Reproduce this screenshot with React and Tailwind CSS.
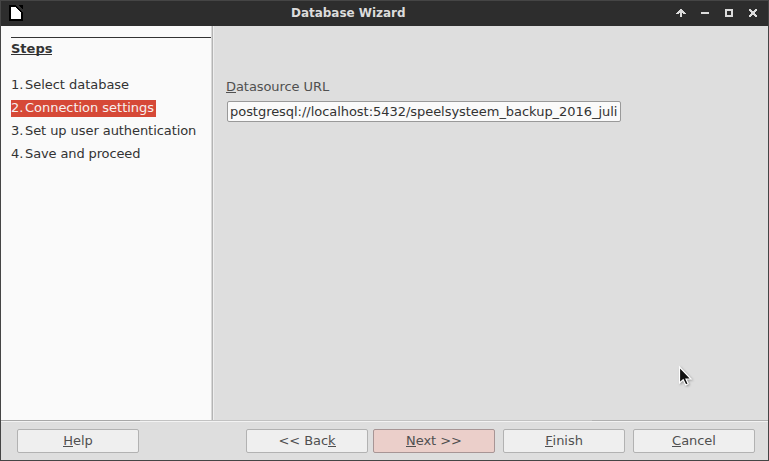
import React from "react";

const steps = ["Select database", "Connection settings", "Set up user authentication", "Save and proceed"];

const stepStyles = [
  "tracking-[-0.03px]",
  "tracking-[-0.03px] bg-[#d64937] text-[#f7f0ef]",
  "tracking-[-0.07px]",
  "tracking-[-0.12px]",
];

function DocumentIcon() {
  return (
    <svg className="ml-2 mt-1 block" width="14" height="16" viewBox="0 0 14 16" shapeRendering="crispEdges">
      <path d="M0 0H14V16H0Z" fill="#000" />
      <path d="M7 0H9L14 5V8L12 6Z" fill="#303030" />
      <path d="M2 2H7V3H8V4H9V5H10V6H11V7H12V14H2Z" fill="#fff" />
    </svg>
  );
}

function WindowControls() {
  return (
    <svg className="block" width="92" height="25" viewBox="676 1 92 25" shapeRendering="crispEdges" fill="#dcdcdc">
      <path d="M680 9h2v1h1v1h1v1h1v1h1v1h-3v-1h-1v4h-2v-4h-1v1h-3v-1h1v-1h1v-1h1v-1h1z" />
      <path d="M701 12h8v2h-8z" />
      <path fillRule="evenodd" d="M725 9h8v8h-8zM727 11v4h4v-4z" />
      <path d="M749 9h2v1h1v1h2v-1h1v-1h2v2h-1v1h-1v2h1v1h1v2h-2v-1h-1v-1h-2v1h-1v1h-2v-2h1v-1h1v-2h-1v-1h-1z" />
    </svg>
  );
}

function WizardButton({ className = "", children }) {
  return (
    <button
      className={
        "flex h-6 w-[122px] shrink-0 justify-center whitespace-pre rounded-[2px] border pt-px text-center leading-[19px] tracking-[-0.04px] text-[#505050] " +
        (className || "border-[#b2b2b2] bg-[#efefef]")
      }
    >
      <span>{children}</span>
    </button>
  );
}

function Mnemonic({ children }) {
  return <span className="inline-block h-[14px] border-b border-[#505050] leading-[16px]">{children}</span>;
}

export default function App() {
  return (
    <div className="flex h-[461px] w-[769px] flex-col overflow-hidden border border-[#454545] bg-[#dedede] font-['DejaVu_Sans',sans-serif] text-[13px] text-[#333]">
      <header className="flex h-[25px] shrink-0 bg-[#2d2d2d]">
        <DocumentIcon />
        <h1 className="w-[650px] pl-[268px] text-[12px] font-bold leading-[25px] tracking-[-0.03px] text-[#dcdcdc]">Database Wizard</h1>
        <div className="ml-auto shrink-0">
          <WindowControls />
        </div>
      </header>

      <main className="flex h-[394px] shrink-0">
        <aside className="w-[210px] shrink-0 bg-[#fafafa] pl-[10px] pt-[11px]">
          <div className="h-px bg-[#333]" />
          <h2 className="mt-[3px] flex">
            <span className="h-[14px] border-b border-[#333] font-bold leading-[16px]">Steps</span>
          </h2>
          <ol className="mt-[22px] flex flex-col gap-[6px]">
            {steps.map((step, i) => (
              <li key={step} className={"flex h-[17px] w-fit whitespace-nowrap pr-[2px] leading-[16px] " + stepStyles[i]}>
                <span className="w-[14px]">{i + 1}.</span>
                <span>{step}</span>
              </li>
            ))}
          </ol>
        </aside>
        <div className="w-[3px] shrink-0 border-l border-r border-l-[#d8d8d8] border-r-[#eeeeee] bg-[#b4b4b4]" />
        <section className="pl-[12px] pt-[52px]">
          <label className="block h-[17px] leading-[17px] tracking-[-0.07px] text-[#505050]">
            <Mnemonic>D</Mnemonic>atasource URL
          </label>
          <input
            readOnly
            value="postgresql://localhost:5432/speelsysteem_backup_2016_juli"
            className="ml-px mt-[6px] block h-[21px] w-[394px] rounded-[2px] border border-[#999] bg-[#fafafa] px-[2px] leading-[19px] tracking-[-0.04px] outline-none"
          />
        </section>
      </main>

      <footer className="flex h-10 shrink-0 flex-col">
        <div className="flex h-px shrink-0">
          <div className="w-[139px] bg-[#a8a8a8]" />
          <div className="w-[452px] bg-[#c2c2c2]" />
          <div className="grow bg-[#b0b0b0]" />
        </div>
        <div className="h-px shrink-0 bg-[#f3f3f3]" />
        <div className="flex pl-4 pt-[7px]">
          <WizardButton>
            <Mnemonic>H</Mnemonic>elp
          </WizardButton>
          <div className="ml-[107px] flex gap-[5px]">
            <WizardButton>
              &lt;&lt; Bac<Mnemonic>k</Mnemonic>
            </WizardButton>
            <WizardButton className="border-[#a79595] bg-[#ebcfca]">
              <Mnemonic>N</Mnemonic>ext &gt;&gt;
            </WizardButton>
          </div>
          <div className="ml-2 flex gap-2">
            <WizardButton>
              <Mnemonic>F</Mnemonic>inish
            </WizardButton>
            <WizardButton>
              <Mnemonic>C</Mnemonic>ancel
            </WizardButton>
          </div>
        </div>
      </footer>

      <svg className="absolute left-[678px] top-[365px] drop-shadow-[1px_1px_1px_rgba(0,0,0,0.3)]" width="16" height="22" viewBox="0 0 16 22">
        <path d="M1.5 2V18L5.2 14.8L7.8 20L10.2 18.8L8 14H13Z" fill="#111" stroke="#fff" strokeWidth="1.2" />
      </svg>
    </div>
  );
}
